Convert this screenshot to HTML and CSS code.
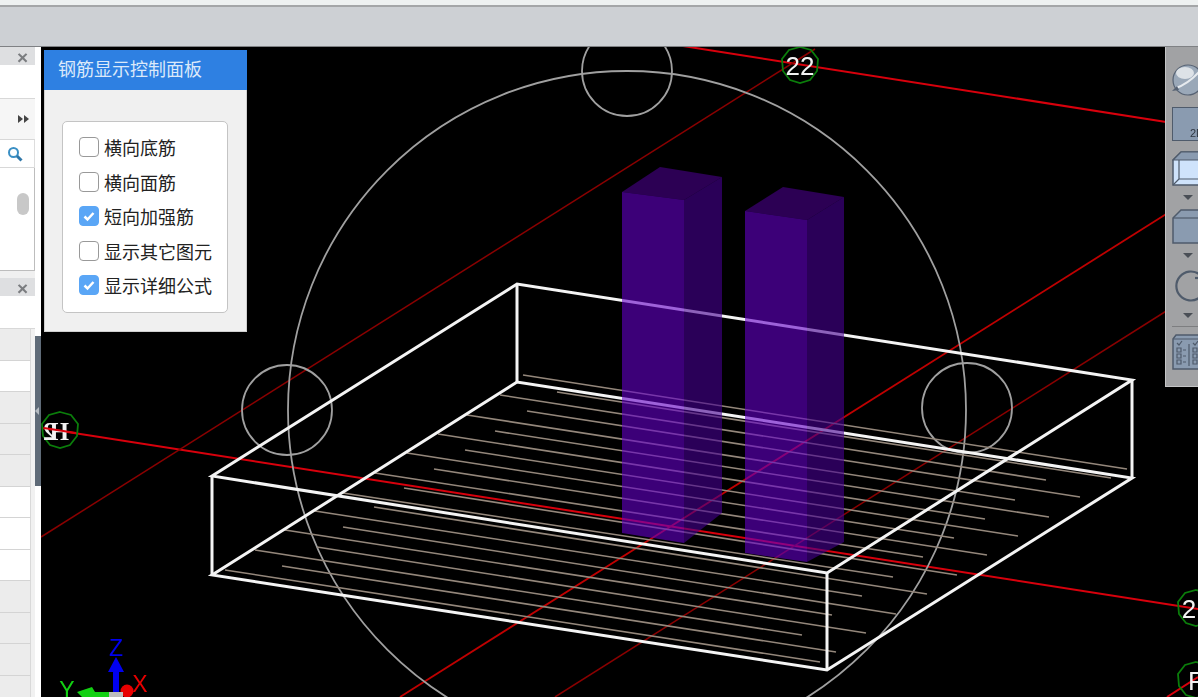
FILE: index.html
```html
<!DOCTYPE html>
<html lang="zh-CN">
<head>
    <meta charset="UTF-8">
    <meta name="viewport" content="width=device-width, initial-scale=1.0">
    <title>钢筋显示控制面板</title>
    <link rel="stylesheet" href="styles.css">
</head>
<body>
    <div class="top-strip"></div>
    <div class="tool-bar"></div>

    <div class="main">
        <!-- 左侧面板 -->
        <div class="side">
            <div class="side-head"><span class="close-x">×</span></div>
            <div class="side-row side-row-a"></div>
            <div class="side-row side-row-b">
                <svg class="more-icon" width="12" height="8" viewBox="0 0 12 8"><path d="M0 0l5 4-5 4zM6 0l5 4-5 4z"/></svg>
            </div>
            <div class="side-row side-search">
                <svg width="16" height="16" viewBox="0 0 16 16"><circle cx="6.500" cy="6.500" r="4.500" class="search-ring"/><path d="M10 10l4.500 4.500" class="search-handle"/></svg>
            </div>
            <div class="side-list"><div class="thumb"></div></div>
            <div class="side-gap"></div>
            <div class="side-head"><span class="close-x">×</span></div>
            <div class="side-row side-row-c"></div>
            <div class="grid-rows">
                <div class="cell grey"></div>
                <div class="cell"></div>
                <div class="cell grey"></div>
                <div class="cell grey"></div>
                <div class="cell grey"></div>
                <div class="cell"></div>
                <div class="cell"></div>
                <div class="cell"></div>
                <div class="cell grey"></div>
                <div class="cell grey"></div>
                <div class="cell grey"></div>
                <div class="cell grey"></div>
            </div>
        </div>

        <!-- 分隔条 -->
        <div class="splitter">
            <div class="splitter-handle"><span class="splitter-arrow"></span></div>
        </div>

        <!-- 三维视图 -->
        <div class="viewport">
            <svg class="scene" width="1157" height="650" viewBox="41 47 1157 650">
                <defs>
                    <polygon id="ring" points="0,-18 11,-15 18,-6 17,6 10,15 0,18 -10,15 -17,6 -18,-6 -11,-15"/>
                </defs>

                <!-- 轴线 -->
                <g class="axis-bright">
                    <path d="M683 46L1198 127"/>
                    <path d="M42 428L1198 609"/>
                    <path d="M1198 677L1167 697"/>
                </g>
                <g class="axis-mid">
                    <path d="M1198 194L400 697"/>
                </g>
                <g class="axis-dark">
                    <path d="M41 537L815 49"/>
                    <path d="M1198 291L555 697"/>
                </g>

                <!-- 圆 -->
                <g class="circles">
                    <circle cx="627" cy="410" r="339"/>
                    <circle cx="627" cy="71" r="45"/>
                    <circle cx="287" cy="410" r="45"/>
                    <circle cx="967" cy="408" r="45"/>
                </g>

                <!-- 钢筋 -->
                <g class="rebar">
                    <path d="M523 375L1127 469"/>
                    <path d="M557 392L1111 478"/>
                    <path d="M500 395L1046 480"/>
                    <path d="M527 411L1080 497"/>
                    <path d="M467 415L1015 500"/>
                    <path d="M495 431L1049 517"/>
                    <path d="M438 434L985 519"/>
                    <path d="M465 450L1018 536"/>
                    <path d="M407 453L954 538"/>
                    <path d="M434 469L987 555"/>
                    <path d="M375 473L923 557"/>
                    <path d="M404 488L957 575"/>
                    <path d="M343 493L893 577"/>
                    <path d="M374 507L927 594"/>
                    <path d="M315 511L862 596"/>
                    <path d="M343 527L896 614"/>
                    <path d="M285 530L832 615"/>
                    <path d="M317 547L866 633"/>
                    <path d="M255 550L802 635"/>
                    <path d="M282 566L836 652"/>
                    <path d="M225 570L820 662"/>
                </g>

                <!-- 板 -->
                <g class="slab">
                    <path d="M212 476L517 284L1132 380L827 573Z"/>
                    <path d="M212 575L517 382L1132 478L827 670Z"/>
                    <path d="M212 476V575M517 284V382M1132 380V478M827 573V670"/>
                </g>

                <!-- 柱 -->
                <g class="column">
                    <path class="col-top" d="M622 192L660 167L722 177L684 200Z"/>
                    <path class="col-side" d="M684 200L722 177V513L684 543Z"/>
                    <path class="col-front" d="M622 192L684 200V543L622 533Z"/>
                    <path class="col-top" d="M745 211L783 187L844 197L807 220Z"/>
                    <path class="col-side" d="M807 220L844 197V542L807 562Z"/>
                    <path class="col-front" d="M745 211L807 220V562L745 553Z"/>
                </g>

                <!-- 轴号 -->
                <g class="axis-ring">
                    <use href="#ring" x="800" y="65"/>
                    <use href="#ring" x="60" y="430"/>
                    <use href="#ring" x="1196" y="608"/>
                    <use href="#ring" x="1196" y="680"/>
                </g>
                <text class="axis-label" x="800" y="75">22</text>
                <text class="axis-label axis-h" x="-59" y="440" transform="scale(-1 1)">H2</text>
                <text class="axis-label" x="1189" y="618">2</text>
                <text class="axis-label" x="1196" y="690">F</text>
                <g class="axis-bright"><path d="M44 428L76 433"/></g>

                <!-- 坐标系 -->
                <circle class="xyz-red" cx="127" cy="691" r="6.500"/>
                <path class="xyz-green" d="M77 692L92 687L95 692H110V697H82Z"/>
                <path class="xyz-blue" d="M113 693V672H108L116 657L124 672H119V693Z"/>
                <rect class="xyz-box" x="109" y="692" width="14" height="5"/>
                <text class="xyz-text xyz-z" x="116" y="656">Z</text>
                <text class="xyz-text xyz-y" x="67" y="698">Y</text>
                <text class="xyz-text xyz-x" x="140" y="692">X</text>
            </svg>

            <!-- 钢筋显示控制面板 -->
            <div class="rebar-panel">
                <div class="panel-title">钢筋显示控制面板</div>
                <div class="panel-body">
                    <div class="option-box">
                        <label class="option"><span class="check"></span>横向底筋</label>
                        <label class="option"><span class="check"></span>横向面筋</label>
                        <label class="option"><span class="check checked"><svg width="20" height="20" viewBox="0 0 20 20"><path d="M5.500 10.500l3 3 6-6.500"/></svg></span>短向加强筋</label>
                        <label class="option"><span class="check"></span>显示其它图元</label>
                        <label class="option"><span class="check checked"><svg width="20" height="20" viewBox="0 0 20 20"><path d="M5.500 10.500l3 3 6-6.500"/></svg></span>显示详细公式</label>
                    </div>
                </div>
            </div>

            <!-- 右侧工具条 -->
            <div class="view-tools">
                <svg class="tool tool-sphere" width="27" height="32" viewBox="0 0 27 32">
                    <circle cx="16" cy="16" r="15" class="sphere"/>
                    <ellipse cx="13" cy="9" rx="9" ry="6" class="sphere-shine"/>
                    <path d="M4 24Q16 20 27 8" class="sphere-line"/>
                    <path d="M0 27L5 22L7 26Z" class="sphere-tail"/>
                </svg>
                <div class="tool-2d">2D</div>
                <svg class="tool" width="27" height="35" viewBox="0 0 27 35">
                    <path d="M1 9L9 1H27V34H1Z" class="cube-light"/>
                    <path d="M1 9L9 1H27V9Z" class="cube-band"/>
                    <path d="M7 9V28M7 28H27M1 34L7 28" class="cube-line"/>
                </svg>
                <span class="drop"></span>
                <svg class="tool" width="27" height="35" viewBox="0 0 27 35">
                    <path d="M1 9L9 1H27V34H1Z" class="cube-dark"/>
                    <path d="M1 9H27" class="cube-line"/>
                </svg>
                <span class="drop"></span>
                <svg class="tool tool-rotate" width="27" height="34" viewBox="0 0 27 34">
                    <path d="M27 4A14.500 14.500 0 1 0 27 28" class="rotate-line"/>
                    <path d="M23 8h4" class="rotate-line"/>
                </svg>
                <span class="drop"></span>
                <div class="tool-sep"></div>
                <svg class="tool" width="27" height="36" viewBox="0 0 27 36">
                    <path d="M1 5L4 1H27V35H1Z" class="list-bg"/>
                    <path d="M1 5H27M17 10V32M5 9l2 2 3-4M21 9l2 2 3-4" class="cube-line"/>
                    <path d="M5 14h4v4H5zM5 20h4v4H5zM5 26h4v4H5zM21 14h4v4h-4zM21 20h4v4h-4zM21 26h4v4h-4zM11 16h3M11 22h3M11 28h3" class="cube-line"/>
                </svg>
            </div>
        </div>
    </div>
</body>
</html>
```

FILE: styles.css
```css
* {
    margin: 0;
    padding: 0;
    box-sizing: border-box;
}

html,
body {
    width: 1198px;
    height: 697px;
    overflow: hidden;
}

body {
    display: flex;
    flex-direction: column;
    background: #fff;
    font-family: "Liberation Sans", "Noto Sans CJK SC", sans-serif;
    filter: blur(0.4px);
}

.top-strip {
    height: 5px;
    background: #eef1f1;
}

.tool-bar {
    height: 42px;
    background: #cdd0d4;
    border-top: 2px solid #a4a6a8;
    border-bottom: 1px solid #7f8184;
}

.main {
    flex: 1;
    display: flex;
    min-height: 0;
}

/* 左侧面板 */
.side {
    width: 35px;
    display: flex;
    flex-direction: column;
    background: #fff;
    overflow: hidden;
}

.side > * {
    flex: none;
}

.side-head {
    height: 18px;
    background: #dedfe1;
    display: flex;
    justify-content: flex-end;
    align-items: center;
    padding: 3px 7px 0 0;
}

.close-x {
    font-size: 19px;
    line-height: 15px;
    font-weight: bold;
    color: #7b7d80;
}

.side-row {
    border-bottom: 1px solid #d8d8d8;
    background: #fff;
}

.side-row-a {
    height: 34px;
}

.side-row-c {
    height: 33px;
}

.side-row-b {
    height: 41px;
    display: flex;
    justify-content: flex-end;
    align-items: center;
    padding-right: 5px;
    background: #f6f6f6;
}

.more-icon {
    fill: #444;
}

.side-search {
    height: 28px;
    display: flex;
    align-items: center;
    padding-left: 7px;
    border-right: 1px solid #ddd;
}

.search-ring {
    fill: none;
    stroke: #3a8fc4;
    stroke-width: 2;
}

.search-handle {
    stroke: #2f77a8;
    stroke-width: 3;
    fill: none;
}

.side-list {
    height: 103px;
    padding: 25px 6px 0 17px;
    border-right: 1px solid #bdbdbd;
    border-bottom: 1px solid #bdbdbd;
}

.thumb {
    width: 12px;
    height: 22px;
    border-radius: 6px;
    background: #c8c8c8;
}

.side-gap {
    height: 7px;
    background: #f0f0f0;
}

.grid-rows {
    border-right: 4px solid #f1f1f1;
}

.cell {
    height: 31.500px;
    background: #fff;
    border-bottom: 1px solid #d4d4d4;
    border-right: 1px solid #d9d9d9;
}

.cell.grey {
    background: #ececec;
}

/* 分隔条 */
.splitter {
    width: 6px;
    background: #fff;
}

.splitter-handle {
    height: 150px;
    margin-top: 289px;
    background: #5f6b78;
    display: flex;
    align-items: center;
}

.splitter-arrow {
    border-style: solid;
    border-width: 4px 4px 4px 0;
    border-color: transparent #b6bcc2 transparent transparent;
}

/* 三维视图 */
.viewport {
    flex: 1;
    position: relative;
    background: #000;
    overflow: hidden;
}

.scene {
    display: block;
}

.axis-bright path {
    stroke: #d8000c;
    stroke-width: 2;
    fill: none;
}

.axis-mid path {
    stroke: #bf0000;
    stroke-width: 1.800;
    fill: none;
}

.axis-dark path {
    stroke: #8a0000;
    stroke-width: 1.500;
    fill: none;
}

.circles circle {
    stroke: #a0a0a0;
    stroke-width: 1.800;
    fill: none;
}

.rebar path {
    stroke: #94877b;
    stroke-width: 1.600;
    fill: none;
}

.slab path {
    stroke: #f4f4f4;
    stroke-width: 3;
    fill: none;
}

.col-top {
    fill: rgb(73, 0, 140);
    fill-opacity: 0.6;
}

.col-side {
    fill: rgb(70, 0, 147);
    fill-opacity: 0.6;
}

.col-front {
    fill: rgb(100, 0, 200);
    fill-opacity: 0.6;
}

.axis-ring use {
    stroke: #0b7d0b;
    stroke-width: 1.800;
    fill: none;
}

.axis-label {
    fill: #f2f2f2;
    font-size: 26px;
    text-anchor: middle;
}

.axis-h {
    font-family: "Liberation Serif", serif;
    font-weight: bold;
    font-size: 25px;
    letter-spacing: -6px;
}

.xyz-red {
    fill: #e80000;
}

.xyz-green {
    fill: #12d012;
}

.xyz-blue {
    fill: #0000f0;
}

.xyz-box {
    fill: #bcbcbc;
}

.xyz-text {
    font-size: 23px;
    text-anchor: middle;
}

.xyz-z {
    fill: #0000f0;
}

.xyz-y {
    fill: #12d012;
}

.xyz-x {
    fill: #e80000;
}

/* 钢筋显示控制面板 */
.rebar-panel {
    position: absolute;
    left: 3px;
    top: 3px;
    width: 203px;
    height: 282px;
    background: #f0f0f0;
    border-right: 1px solid #cfcfcf;
    border-bottom: 1px solid #cfcfcf;
    border-left: 1px solid #cfcfcf;
}

.panel-title {
    height: 40px;
    margin: 0 -1px;
    padding-left: 14px;
    background: #2e80e2;
    color: #dbe9fa;
    font-size: 18px;
    line-height: 41px;
}

.panel-body {
    padding: 31px 18px 0 17px;
}

.option-box {
    height: 192px;
    padding: 8px 0 0 16px;
    background: #fff;
    border: 1px solid #c4c4c4;
    border-radius: 5px;
}

.option {
    height: 34.500px;
    display: flex;
    align-items: center;
    gap: 5px;
    color: #222;
    font-size: 18px;
}

.check {
    width: 20px;
    height: 20px;
    border: 1px solid #999;
    border-radius: 4px;
    background: #fff;
    flex: none;
}

.check svg {
    display: block;
    margin: -1px;
}

.check.checked {
    background: #5aa6f6;
    border-color: #5aa6f6;
}

.check path {
    fill: none;
    stroke: #fff;
    stroke-width: 2.500;
}

/* 右侧工具条 */
.view-tools {
    position: absolute;
    right: 0;
    top: 0;
    width: 33px;
    height: 340px;
    padding: 17px 0 0 6px;
    display: flex;
    flex-direction: column;
    background: #a1a2a4;
    border-left: 1px solid #c4c5c6;
    border-bottom: 1px solid #c4c5c6;
    overflow: hidden;
}

.tool {
    display: block;
    flex: none;
}

.tool-sphere {
    margin-bottom: 11px;
}

.tool-rotate {
    margin-top: 3px;
}

.sphere {
    fill: #9aa8b8;
    stroke: #566273;
    stroke-width: 1.200;
}

.sphere-line {
    fill: none;
    stroke: #e6eaee;
    stroke-width: 2;
}

.sphere-shine {
    fill: #dde2e7;
}

.sphere-tail {
    fill: #566273;
}

.tool-2d {
    width: 30px;
    height: 34px;
    margin-bottom: 10px;
    padding: 19px 0 0 17px;
    flex: none;
    background: #8a9bb0;
    border: 1px solid #4f5b6b;
    color: #2f3742;
    font-size: 11px;
    line-height: 12px;
}

.cube-light {
    fill: #cfe3fb;
    stroke: #4f5b6b;
    stroke-width: 1.500;
}

.cube-band {
    fill: #8a9bb0;
    stroke: #4f5b6b;
    stroke-width: 1.200;
}

.cube-dark {
    fill: #8a9bb0;
    stroke: #4f5b6b;
    stroke-width: 1.500;
}

.cube-line {
    fill: none;
    stroke: #4f5b6b;
    stroke-width: 1.200;
}

.rotate-line {
    fill: none;
    stroke: #4f5b6b;
    stroke-width: 2.200;
}

.list-bg {
    fill: #8a9bb0;
    stroke: #4f5b6b;
    stroke-width: 1.500;
}

.drop {
    display: block;
    width: 0;
    height: 0;
    flex: none;
    margin: 9px 0 9px 11px;
    border-style: solid;
    border-width: 5px 5px 0;
    border-color: #4a4f56 transparent transparent;
}

.tool-sep {
    height: 1px;
    width: 27px;
    margin: -1px 0 7px;
    flex: none;
    background: #7d7e80;
}
```
